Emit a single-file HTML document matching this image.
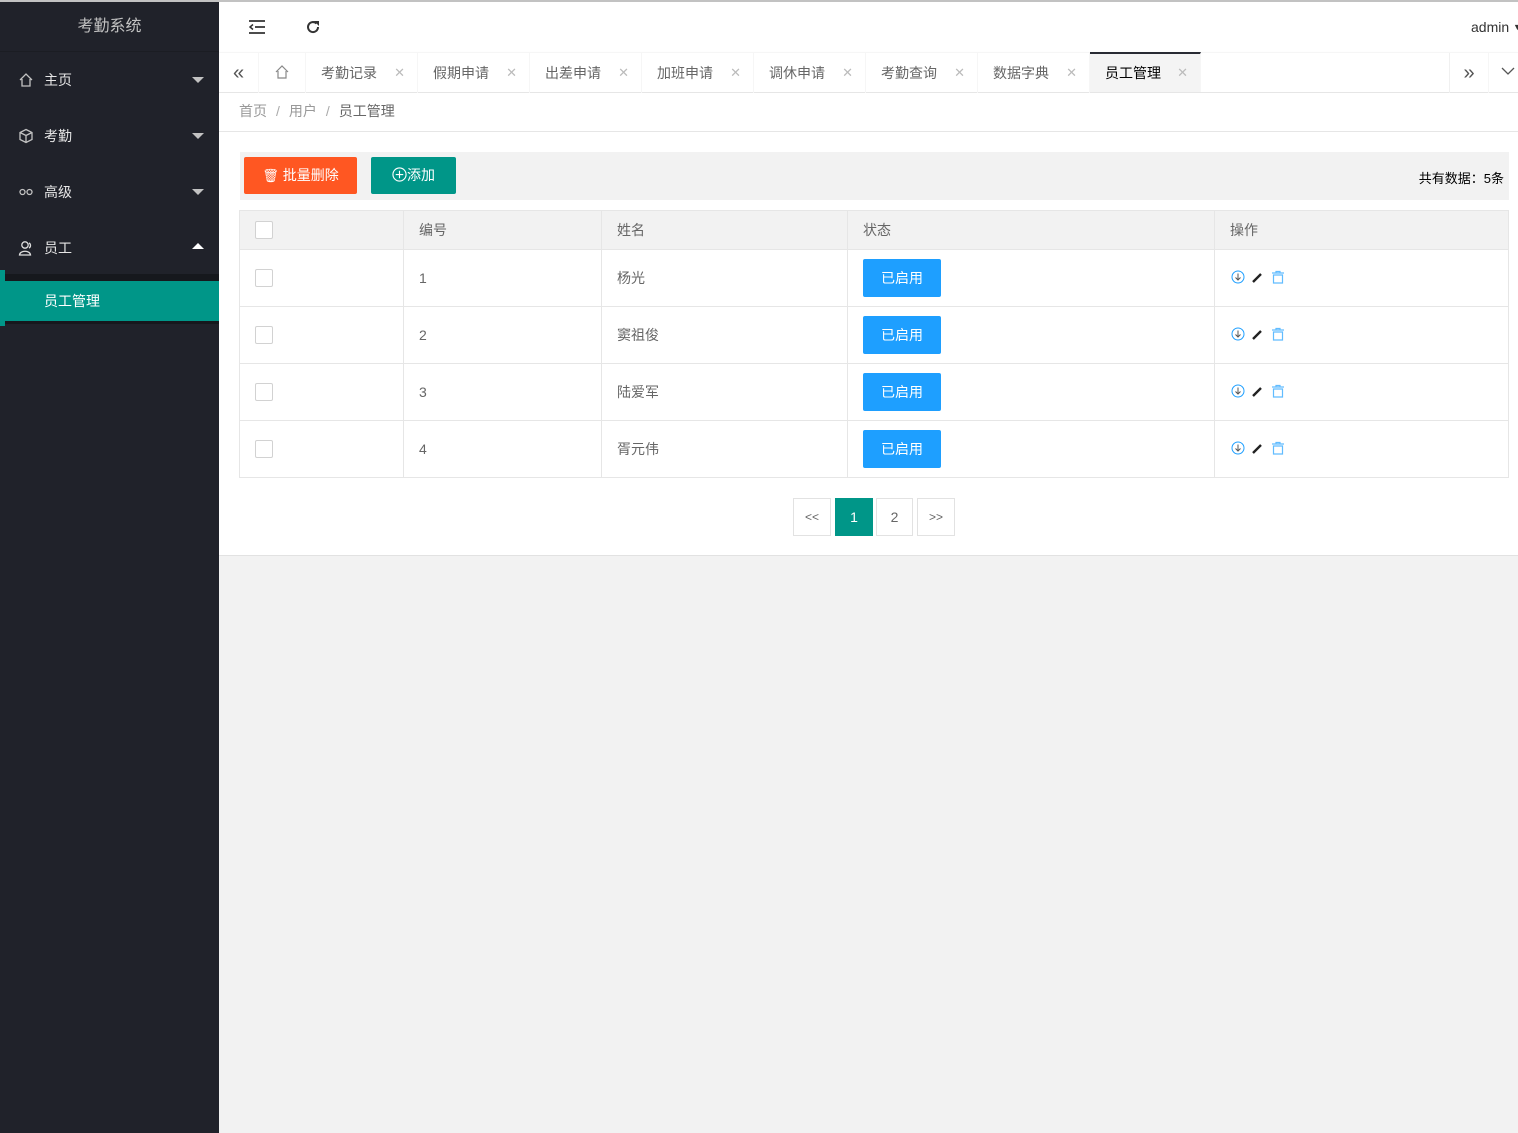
<!DOCTYPE html>
<html><head><meta charset="utf-8">
<style>
*{margin:0;padding:0;box-sizing:border-box}
body{width:1518px;height:1133px;overflow:hidden;background:#f2f2f2;font-family:"Liberation Sans","Noto Sans CJK SC",sans-serif;font-size:14px;color:#333;position:relative}
.topline{position:absolute;left:0;top:0;width:1518px;height:2px;background:#c2c2c2}
.side{position:absolute;left:0;top:2px;width:219px;height:1131px;background:#20222a}
.logo{height:50px;line-height:50px;text-align:center;color:#c2c2c2;font-size:16px;border-bottom:1px solid #1b1d23}
.mi{position:absolute;left:0;width:219px;height:56px;line-height:56px;color:#e6e6e6;font-size:14px}
.mi .ic{position:absolute;left:18px;top:20px;width:16px;height:16px}
.mi .t{position:absolute;left:44px}
.mi .ar{position:absolute;right:15px;top:25px;width:0;height:0;border-left:6px solid transparent;border-right:6px solid transparent;border-top:6px solid #c2c2c2}
.mi .up{border-top:none;border-bottom:6px solid #fff;top:23px}
.sub{position:absolute;left:0;top:274px;width:219px;height:50px;background:#16181d}
.subsel{position:absolute;left:0;top:279px;width:219px;height:40px;background:#009688;color:#fff;line-height:40px;padding-left:44px;font-size:14px}
.subbar{position:absolute;left:0;top:268px;width:5px;height:56px;background:#009688}
.head{position:absolute;left:219px;top:2px;width:1299px;height:50px;background:#fff;overflow:hidden}
.tabs{position:absolute;left:219px;top:52px;width:1299px;height:41px;background:#fff;border-top:1px solid #f6f6f6;border-bottom:1px solid #e6e6e6;box-shadow:0 1px 2px rgba(0,0,0,.05)}
.tab{position:absolute;top:0;height:40px;line-height:40px;color:#666;font-size:14px;border-right:1px solid #f6f6f6}
.tab .x{position:absolute;right:12px;top:0;color:#bbb;font-size:13px}
.crumb{position:absolute;left:219px;top:93px;width:1299px;height:39px;background:#fff;border-bottom:1px solid #e6e6e6;line-height:36px;padding-left:20px;color:#999;font-size:14px}
.crumb span.s{margin:0 9px;color:#aaa}
.main{position:absolute;left:219px;top:132px;width:1299px;height:424px;background:#fff;border-bottom:1px solid #e2e2e2}
.tool{position:absolute;left:21px;top:20px;width:1269px;height:48px;background:#f2f2f2}
.btn{position:absolute;top:5px;height:37px;line-height:37px;color:#fff;font-size:14px;border-radius:2px;text-align:center}
table{position:absolute;left:20px;top:78px;width:1270px;border-collapse:collapse}
td,th{border:1px solid #e6e6e6;font-weight:normal;text-align:left;padding-left:15px;color:#666;font-size:14px}
th{height:39px;background:#f2f2f2}
td{height:57px}
.cb{display:inline-block;width:18px;height:18px;border:1px solid #d2d2d2;background:#fff;vertical-align:middle;border-radius:2px}
.on{display:inline-block;width:78px;height:38px;line-height:38px;background:#1e9fff;color:#fff;text-align:center;border-radius:2px}
.pg{position:absolute;top:366px;height:38px;width:38px;line-height:36px;text-align:center;border:1px solid #e2e2e2;color:#666;font-size:12px}
</style></head><body>
<div class="topline"></div>
<div class="side">
  <div class="logo">考勤系统</div>
  <div class="mi" style="top:50px"><svg class="ic" viewBox="0 0 16 16"><path d="M2 8 L8 2 L14 8 M4 7 V14 H12 V7" fill="none" stroke="#c2c2c2" stroke-width="1.3"/></svg><span class="t">主页</span><i class="ar"></i></div>
  <div class="mi" style="top:106px"><svg class="ic" viewBox="0 0 16 16"><path d="M8 1.5 L14 4.5 V11.5 L8 14.5 L2 11.5 V4.5 Z M2 4.5 L8 7.5 L14 4.5 M8 7.5 V14.5" fill="none" stroke="#c2c2c2" stroke-width="1.3"/></svg><span class="t">考勤</span><i class="ar"></i></div>
  <div class="mi" style="top:162px"><svg class="ic" viewBox="0 0 16 16"><circle cx="4.5" cy="8" r="2.5" fill="none" stroke="#c2c2c2" stroke-width="1.3"/><circle cx="11.5" cy="8" r="2.5" fill="none" stroke="#c2c2c2" stroke-width="1.3"/></svg><span class="t">高级</span><i class="ar"></i></div>
  <div class="mi" style="top:218px"><svg class="ic" viewBox="0 0 16 16"><circle cx="7" cy="5" r="3.2" fill="none" stroke="#ddd" stroke-width="1.3"/><path d="M1.5 15 C2 10 12 10 12.5 15 Z M11 3 C13 4 13 7 11 8" fill="none" stroke="#ddd" stroke-width="1.3"/></svg><span class="t">员工</span><i class="ar up"></i></div>
  <div class="sub" style="top:272px"></div>
  <div class="subbar"></div>
  <div class="subsel" style="top:279px;left:5px;width:214px;padding-left:39px">员工管理</div>
</div>
<div class="head">
  <svg style="position:absolute;left:30px;top:18px" width="16" height="14" viewBox="0 0 16 14"><path d="M0 1H16M6 7H16M0 13H16" stroke="#333" stroke-width="1.8"/><path d="M4 4.5L1 7L4 9.5" fill="none" stroke="#333" stroke-width="1.5"/></svg>
  <svg style="position:absolute;left:86px;top:17px" width="16" height="16" viewBox="0 0 16 16"><path d="M13 8A5 5 0 1 1 11.5 4.5" fill="none" stroke="#333" stroke-width="2"/><path d="M9 2H14V7Z" fill="#333"/></svg>
  <div style="position:absolute;left:1252px;top:17px;color:#333;font-size:14px;white-space:nowrap">admin <span style="font-size:9px;vertical-align:2px">▼</span></div>
</div>
<div class="tabs">
  <div class="tab" style="left:0;width:40px;text-align:center;font-size:20px;color:#555">«</div>
  <div class="tab" style="left:40px;width:47px"><svg style="position:absolute;left:15px;top:11px" width="16" height="16" viewBox="0 0 16 16"><path d="M2 8 L8 2 L14 8 M4 7 V14 H12 V7" fill="none" stroke="#888" stroke-width="1.2"/></svg></div>
  <div class="tab" style="left:87px;width:112px;padding-left:15px">考勤记录<span class="x">✕</span></div>
  <div class="tab" style="left:199px;width:112px;padding-left:15px">假期申请<span class="x">✕</span></div>
  <div class="tab" style="left:311px;width:112px;padding-left:15px">出差申请<span class="x">✕</span></div>
  <div class="tab" style="left:423px;width:112px;padding-left:15px">加班申请<span class="x">✕</span></div>
  <div class="tab" style="left:535px;width:112px;padding-left:15px">调休申请<span class="x">✕</span></div>
  <div class="tab" style="left:647px;width:112px;padding-left:15px">考勤查询<span class="x">✕</span></div>
  <div class="tab" style="left:759px;width:112px;padding-left:15px">数据字典<span class="x">✕</span></div>
  <div class="tab" style="left:871px;width:111px;padding-left:15px;background:#f4f4f4;color:#000;border-top:2px solid #292b34;top:-1px;line-height:38px">员工管理<span class="x">✕</span></div>
  <div class="tab" style="left:1230px;width:40px;text-align:center;font-size:20px;color:#555;border-left:1px solid #f0f0f0">»</div>
  <div class="tab" style="left:1271px;width:28px;border:none"><svg style="position:absolute;left:11px;top:14px" width="14" height="9" viewBox="0 0 14 9"><path d="M1 1L7 7L13 1" fill="none" stroke="#555" stroke-width="1.3"/></svg></div>
</div>
<div class="crumb">首页<span class="s">/</span>用户<span class="s">/</span><span style="color:#666">员工管理</span></div>
<div class="main">
  <div class="tool">
    <div class="btn" style="left:4px;width:113px;background:#ff5722"><span style="font-size:13px">🗑</span> 批量删除</div>
    <div class="btn" style="left:131px;width:85px;background:#009688"><svg width="15" height="15" viewBox="0 0 16 16" style="vertical-align:-2px"><circle cx="8" cy="8" r="7" fill="none" stroke="#fff" stroke-width="1.2"/><path d="M8 4V12M4 8H12" stroke="#fff" stroke-width="1.2"/></svg>添加</div>
    <div style="position:absolute;right:5px;top:16px;color:#000;font-size:13px">共有数据：5条</div>
  </div>
  <table>
    <tr><th style="width:164px"><span class="cb"></span></th><th style="width:198px">编号</th><th style="width:246px">姓名</th><th style="width:367px">状态</th><th>操作</th></tr>
    <tr><td><span class="cb"></span></td><td>1</td><td>杨光</td><td><span class="on">已启用</span></td><td><svg width="60" height="16" viewBox="0 0 60 16"><circle cx="8" cy="8" r="6" fill="none" stroke="#1e9fff" stroke-width="1"/><path d="M8 4.5V11M5.5 8.5L8 11L10.5 8.5" fill="none" stroke="#555" stroke-width="1"/><path d="M23 13L31 5" stroke="#222" stroke-width="2.4"/><path d="M42 4H54M46 4V2.5H50V4M43.5 6H52.5V14H43.5Z" fill="none" stroke="#1e9fff" stroke-width="1.2" opacity=".7"/></svg></td></tr>
    <tr><td><span class="cb"></span></td><td>2</td><td>窦祖俊</td><td><span class="on">已启用</span></td><td><svg width="60" height="16" viewBox="0 0 60 16"><circle cx="8" cy="8" r="6" fill="none" stroke="#1e9fff" stroke-width="1"/><path d="M8 4.5V11M5.5 8.5L8 11L10.5 8.5" fill="none" stroke="#555" stroke-width="1"/><path d="M23 13L31 5" stroke="#222" stroke-width="2.4"/><path d="M42 4H54M46 4V2.5H50V4M43.5 6H52.5V14H43.5Z" fill="none" stroke="#1e9fff" stroke-width="1.2" opacity=".7"/></svg></td></tr>
    <tr><td><span class="cb"></span></td><td>3</td><td>陆爱军</td><td><span class="on">已启用</span></td><td><svg width="60" height="16" viewBox="0 0 60 16"><circle cx="8" cy="8" r="6" fill="none" stroke="#1e9fff" stroke-width="1"/><path d="M8 4.5V11M5.5 8.5L8 11L10.5 8.5" fill="none" stroke="#555" stroke-width="1"/><path d="M23 13L31 5" stroke="#222" stroke-width="2.4"/><path d="M42 4H54M46 4V2.5H50V4M43.5 6H52.5V14H43.5Z" fill="none" stroke="#1e9fff" stroke-width="1.2" opacity=".7"/></svg></td></tr>
    <tr><td><span class="cb"></span></td><td>4</td><td>胥元伟</td><td><span class="on">已启用</span></td><td><svg width="60" height="16" viewBox="0 0 60 16"><circle cx="8" cy="8" r="6" fill="none" stroke="#1e9fff" stroke-width="1"/><path d="M8 4.5V11M5.5 8.5L8 11L10.5 8.5" fill="none" stroke="#555" stroke-width="1"/><path d="M23 13L31 5" stroke="#222" stroke-width="2.4"/><path d="M42 4H54M46 4V2.5H50V4M43.5 6H52.5V14H43.5Z" fill="none" stroke="#1e9fff" stroke-width="1.2" opacity=".7"/></svg></td></tr>
  </table>
  <div class="pg" style="left:574px">&lt;&lt;</div>
  <div class="pg" style="left:616px;background:#009688;border-color:#009688;color:#fff;font-size:14px">1</div>
  <div class="pg" style="left:657px;width:37px;font-size:14px">2</div>
  <div class="pg" style="left:698px">&gt;&gt;</div>
</div>
</body></html>
